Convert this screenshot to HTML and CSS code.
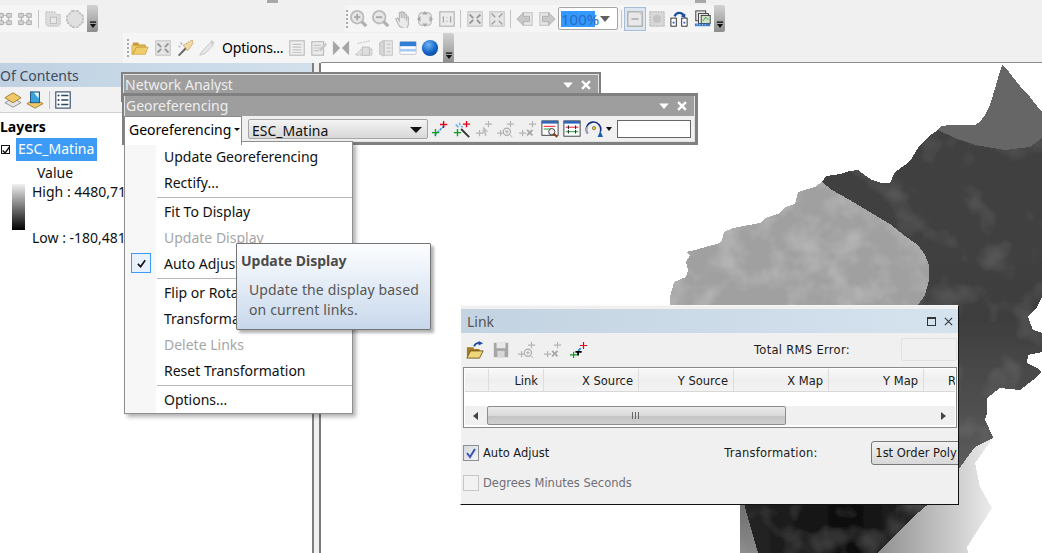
FILE: index.html
```html
<!DOCTYPE html>
<html lang="en">
<head>
<meta charset="utf-8">
<title>ArcMap Georeferencing</title>
<link rel="stylesheet" href="styles.css">
</head>
<body>
<svg class="defs" aria-hidden="true">
  <symbol id="zoomin" viewBox="0 0 20 20"><circle cx="8" cy="8" r="7" fill="#e6e6e6" stroke="#bcbcbc" stroke-width="2"/><path d="M8 4.500v7M4.500 8h7" stroke="#a6a6a6" stroke-width="2"/><path d="M13 13l5 5" stroke="#b0b0b0" stroke-width="3.500"/></symbol>
  <symbol id="zoomout" viewBox="0 0 20 20"><circle cx="8" cy="8" r="7" fill="#e6e6e6" stroke="#bcbcbc" stroke-width="2"/><path d="M4.500 8h7" stroke="#a6a6a6" stroke-width="2"/><path d="M13 13l5 5" stroke="#b0b0b0" stroke-width="3.500"/></symbol>
  <symbol id="hand" viewBox="0 0 20 20"><path d="M6 18L2 10l2-1 2 3V3h2v6-7h2v7-6h2v7-5h2v7-4h2v8l-2 6z" fill="#eaeaea" stroke="#b8b8b8" stroke-width="1.300"/></symbol>
  <symbol id="full" viewBox="0 0 20 20"><rect x="3" y="3" width="14" height="14" rx="4" fill="#e8e8e8" stroke="#c0c0c0" stroke-width="1.500"/><path d="M10 1l3 4H7zM10 19l3-4H7zM1 10l4-3v6zM19 10l-4-3v6z" fill="#a8a8a8"/></symbol>
  <symbol id="one" viewBox="0 0 20 20"><rect x="2" y="2" width="16" height="16" fill="#ececec" stroke="#bbb" stroke-width="1.500"/><path d="M6 7v7M14 7v7M10 8v1M10 12v1" stroke="#a8a8a8" stroke-width="1.500"/></symbol>
  <symbol id="fixin" viewBox="0 0 20 20"><rect x="2" y="2" width="16" height="16" fill="#e6e6e6" stroke="#bdbdbd"/><path d="M4 5l4 4M16 5l-4 4M4 15l4-4M16 15l-4-4" stroke="#979797" stroke-width="2"/></symbol>
  <symbol id="fixout" viewBox="0 0 20 20"><rect x="2" y="2" width="16" height="16" fill="#e6e6e6" stroke="#bdbdbd"/><path d="M8 8L4 4M12 8l4-4M8 12l-4 4M12 12l4 4" stroke="#a2a2a2" stroke-width="1.600"/></symbol>
  <symbol id="back" viewBox="0 0 20 20"><rect x="8" y="3" width="10" height="14" fill="#e6e6e6" stroke="#bdbdbd"/><path d="M1 10l7-7v4h7v6H8v4z" fill="#c8c8c8" stroke="#afafaf"/></symbol>
  <symbol id="forward" viewBox="0 0 20 20"><rect x="2" y="3" width="10" height="14" fill="#e6e6e6" stroke="#bdbdbd"/><path d="M19 10l-7-7v4H5v6h7v4z" fill="#c8c8c8" stroke="#afafaf"/></symbol>
  <symbol id="page" viewBox="0 0 20 20"><rect x="2" y="2" width="16" height="16" fill="#e8e8e8" stroke="#a5a5a5" stroke-width="1.300"/><path d="M6 10h8" stroke="#a0a0a0" stroke-width="1.500"/><path d="M13 2h5v5z" fill="#cfcfcf"/></symbol>
  <symbol id="dots" viewBox="0 0 20 20"><rect x="2" y="2" width="16" height="16" fill="#d8d8d8" stroke="#aaa" stroke-dasharray="2 1"/><circle cx="10" cy="10" r="4.500" fill="#c4c4c4"/></symbol>
  <symbol id="refresh" viewBox="0 0 20 20"><rect x="1" y="9" width="6" height="9" fill="#fff" stroke="#222"/><rect x="13" y="9" width="6" height="9" fill="#fff" stroke="#222"/><path d="M3 14h2M15 14h2" stroke="#2a5aa8" stroke-width="2"/><path d="M5 7c2-5 8-5 10-1" fill="none" stroke="#1d4f9a" stroke-width="2.500"/><path d="M12 7l5 2 0-5z" fill="#1d4f9a"/></symbol>
  <symbol id="pages" viewBox="0 0 20 20"><rect x="2" y="1" width="11" height="11" fill="#e8e8e8" stroke="#333"/><rect x="5" y="4" width="11" height="11" fill="#f4f4f4" stroke="#333"/><rect x="8" y="6" width="10" height="9" fill="#cfe3c8" stroke="#333"/><path d="M10 12l3-4 3 3" fill="none" stroke="#3d8f3d"/><path d="M1 15h17v3H1z" fill="#3a79c9"/><path d="M3 16.500h1M6 16.500h1M9 16.500h1M12 16.500h1" stroke="#fff"/></symbol>
  <symbol id="grid" viewBox="0 0 20 20"><path d="M3 6h14M3 14h14M6 3v14M14 3v14" stroke="#bdbdbd" stroke-width="1.500"/><rect x="3" y="4" width="5" height="4" fill="#d6d6d6" stroke="#aaa"/><rect x="12" y="4" width="5" height="4" fill="#d6d6d6" stroke="#aaa"/><rect x="3" y="12" width="5" height="4" fill="#d6d6d6" stroke="#aaa"/><rect x="12" y="12" width="5" height="4" fill="#d6d6d6" stroke="#aaa"/></symbol>
  <symbol id="blobs" viewBox="0 0 20 20"><path d="M2 2h10l2 3h4v11l-2 2H4l-2-3z" fill="#dcdcdc" stroke="#b8b8b8" stroke-dasharray="2 1"/><rect x="7" y="8" width="7" height="7" fill="#e8e8e8" stroke="#bbb"/></symbol>
  <symbol id="poly" viewBox="0 0 20 20"><path d="M7 1h6l6 6v6l-6 6H7l-6-6V7z" fill="#e0e0e0" stroke="#c0c0c0" stroke-width="2" stroke-dasharray="3 1"/></symbol>
  <symbol id="folder" viewBox="0 0 20 20"><path d="M2 4h6l1 2h7v3H2z" fill="#c99a3a"/><path d="M1 17V7h15v2H6L2 17zM2 17l4-8h13l-3 8z" fill="#f0cd6b" stroke="#c9a040" stroke-width=".8"/></symbol>
  <symbol id="wand" viewBox="0 0 20 20"><path d="M2 18L13 6l2 2L4 19z" fill="#6b6b6b"/><path d="M8 7L18 1l1 4-6 8z" fill="#f0d9a6" stroke="#b9833a" stroke-width=".8" stroke-dasharray="2 1"/><path d="M3 8l2 1M5 4l2 2" stroke="#b0b0b0" stroke-width="1.500"/></symbol>
  <symbol id="pencil" viewBox="0 0 20 20"><path d="M2 18l3-5L14 4l3 3-9 9z" fill="#e6e6e6" stroke="#c4c4c4"/><path d="M15 1l3 3-1 2-3-3z" fill="#c6c6c6"/></symbol>
  <symbol id="table" viewBox="0 0 20 20"><rect x="2" y="2" width="16" height="16" fill="#f0f0f0" stroke="#bbb" stroke-width="1.300"/><path d="M5 6h10M5 9h10M5 12h10M5 15h10" stroke="#c4c4c4" stroke-width="1.300"/></symbol>
  <symbol id="form" viewBox="0 0 20 20"><rect x="2" y="3" width="13" height="15" fill="#ececec" stroke="#bbb" stroke-width="1.300"/><path d="M4 7h8M4 10h8M4 13h6" stroke="#c4c4c4" stroke-width="1.300"/><path d="M10 12l7-8 2 2-7 8z" fill="#c8c8c8"/></symbol>
  <symbol id="bow" viewBox="0 0 20 20"><path d="M1 2l8 8-8 8zM19 2l-8 8 8 8z" fill="#a6a6a6"/></symbol>
  <symbol id="stair" viewBox="0 0 20 20"><path d="M1 17l6-6h12v7H1zM3 5l14-3" fill="#e0e0e0" stroke="#bbb" stroke-dasharray="2 1"/><rect x="8" y="9" width="8" height="9" fill="#dedede" stroke="#bbb"/></symbol>
  <symbol id="book" viewBox="0 0 20 20"><path d="M3 4l5-3v18l-5-2z" fill="#d6d6d6" stroke="#c0c0c0"/><rect x="8" y="2" width="9" height="16" fill="#e8e8e8" stroke="#c0c0c0"/><path d="M11 6h4M11 10h4M11 14h4" stroke="#bbb"/></symbol>
  <symbol id="stripes" viewBox="0 0 20 20"><rect x="1" y="3" width="18" height="14" rx="1" fill="#fff" stroke="#c0c0c0"/><rect x="1" y="3" width="18" height="5" fill="#2f7fd6"/><rect x="1" y="11" width="18" height="3" fill="#a7cdf2"/></symbol>
  <symbol id="globe" viewBox="0 0 20 20"><defs><radialGradient id="gl" cx=".4" cy=".3" r=".8"><stop offset="0" stop-color="#6fb6f5"/><stop offset=".6" stop-color="#1565c8"/><stop offset="1" stop-color="#0b3f94"/></radialGradient></defs><circle cx="10" cy="10" r="9" fill="url(#gl)"/></symbol>
  <symbol id="cross" viewBox="0 0 20 20"><path d="M4 17l12-12" stroke="#2f8fe0" stroke-width="1.500" stroke-dasharray="3 1"/><path d="M14 1v8M10 5h8" stroke="#e2001a" stroke-width="1.500"/><path d="M5 10v8M1 14h8" stroke="#0a9a1e" stroke-width="1.500"/></symbol>
  <symbol id="crosswand" viewBox="0 0 20 20"><path d="M15 1v7M11 4.500h8" stroke="#e2001a" stroke-width="1.500"/><path d="M5 10v8M1 14h8" stroke="#0a9a1e" stroke-width="1.500"/><path d="M9 10l9 9" stroke="#333" stroke-width="2"/><path d="M3 5l3 3M7 3l1 3M11 8l-2-1" stroke="#52a7ee" stroke-width="1.500"/></symbol>
  <symbol id="grayarrow" viewBox="0 0 20 20"><path d="M15 1v7M11 4.500h8M5 11v7M1 14.500h8" stroke="#b4b4b4" stroke-width="1.300"/><path d="M9 7l6 6-3 0 1 4-2 1-1-4-2 2z" fill="#c2c2c2"/></symbol>
  <symbol id="grayzoom" viewBox="0 0 20 20"><path d="M15 1v7M11 4.500h8M4 11v7M0 14.500h8" stroke="#b4b4b4" stroke-width="1.300"/><circle cx="11" cy="13" r="4" fill="#eee" stroke="#adadad" stroke-width="1.300"/><path d="M9 13h4M11 11v4M14 16l3 3" stroke="#adadad"/></symbol>
  <symbol id="grayx" viewBox="0 0 20 20"><path d="M15 1v7M11 4.500h8M4 11v7M0 14.500h8" stroke="#b4b4b4" stroke-width="1.300"/><path d="M9 11l6 6M15 11l-6 6" stroke="#a6a6a6" stroke-width="2"/></symbol>
  <symbol id="viewlinks" viewBox="0 0 20 20"><rect x="1" y="1" width="18" height="16" fill="#fff" stroke="#333"/><rect x="1" y="1" width="18" height="3" fill="#2f66b5"/><path d="M3 7h13" stroke="#e2001a"/><path d="M3 10h9" stroke="#0a9a1e"/><circle cx="12" cy="13" r="3.500" fill="#eee" stroke="#333"/><path d="M14 15l4 4" stroke="#8a3b1a" stroke-width="2"/></symbol>
  <symbol id="links" viewBox="0 0 20 20"><rect x="1" y="1" width="18" height="17" fill="#fff" stroke="#333"/><rect x="1" y="1" width="18" height="3" fill="#2f66b5"/><path d="M3 8h14" stroke="#e2001a"/><path d="M3 13h14" stroke="#0a9a1e"/><path d="M6 6v4M14 6v4M6 11v4M14 11v4" stroke="#111"/></symbol>
  <symbol id="rotate" viewBox="0 0 20 20"><path d="M3 15A8 8 0 1 1 17 13" fill="none" stroke="#1b2f80" stroke-width="1.800"/><path d="M3 15A8 8 0 0 1 3 7" fill="none" stroke="#aab" stroke-width="1.800"/><path d="M14 19h6l-3-7z" fill="#1a5fb4"/><circle cx="10" cy="9" r="1.800" fill="#f2d21b" stroke="#333" stroke-width=".6"/></symbol>
  <symbol id="layers" viewBox="0 0 20 20"><path d="M10 8l9 5-9 5-9-5z" fill="#e3e3e3" stroke="#8c8c8c"/><path d="M10 2l9 5.500-9 5.500-9-5.500z" fill="#f0c868" stroke="#9a7a2a"/></symbol>
  <symbol id="source" viewBox="0 0 20 20"><path d="M10 9l9 5-9 5-9-5z" fill="#f0c868" stroke="#9a7a2a"/><rect x="5" y="1" width="10" height="12" fill="#3aa3dc" stroke="#1d4f7a"/><path d="M9 2h5v6z" fill="#fff"/></symbol>
  <symbol id="options" viewBox="0 0 20 20"><rect x="2" y="1" width="16" height="18" fill="#fff" stroke="#2a4466" stroke-width="1.200"/><path d="M8 5h8M8 10h8M8 15h8" stroke="#2a4466" stroke-width="1.400"/><circle cx="5" cy="5" r="1.200" fill="#2a4466"/><circle cx="5" cy="10" r="1.200" fill="#2a4466"/><circle cx="5" cy="15" r="1.200" fill="#2a4466"/></symbol>
  <symbol id="open" viewBox="0 0 20 20"><path d="M1 7h7l1 2h6v2H5l-4 8z" fill="#a27d24"/><path d="M1 19l4-8h14l-4 8z" fill="#f0d67a" stroke="#6e5616"/><path d="M9 6c1-3 3-4 6-4" fill="none" stroke="#1d4f9a" stroke-width="2"/><path d="M14 0l5 2.500L14 5z" fill="#1d4f9a"/></symbol>
  <symbol id="save" viewBox="0 0 20 20"><path d="M2 2h16v16H2z" fill="#a6a6a6"/><rect x="5" y="2" width="10" height="6" fill="#e8e8e8"/><rect x="6" y="11" width="8" height="7" fill="#d8d8d8"/></symbol>
  <symbol id="linkadd" viewBox="0 0 20 20"><path d="M15 1v8M11 5h8" stroke="#e2001a" stroke-width="1.300"/><path d="M4 12v7M0 15.500h8" stroke="#0a9a1e" stroke-width="1.300"/><path d="M12 8l-3 3" stroke="#2f8fe0" stroke-width="2"/><path d="M9 11h4v2h-3v3H8v-3H6v-2h3z" fill="#000"/></symbol>
  <symbol id="tick" viewBox="0 0 12 12"><path d="M2 6.500l3 3 5-7" fill="none" stroke="#111" stroke-width="1.800"/></symbol>
  <symbol id="ovf" viewBox="0 0 9 8"><path d="M1 0h7v1.500H1z" fill="#111"/><path d="M1 3h7L4.500 7.500z" fill="#111"/></symbol>
  <symbol id="dash" viewBox="0 0 20 20"><path d="M2 6h16L10 15z" fill="#fff"/></symbol>
  <symbol id="close" viewBox="0 0 20 20"><path d="M3.500 3.500l13 13M16.500 3.500l-13 13" stroke="#fff" stroke-width="4"/></symbol>
</svg>

<div class="app">
  <header class="topbar">
    <span class="stub stub-a"></span><span class="stub stub-b"></span>
    <div class="row row-one">
      <div class="toolbar tb-left">
        <svg class="ic ic-cut"><use href="#grid"/></svg>
        <svg class="ic"><use href="#grid"/></svg>
        <i class="sep"></i>
        <svg class="ic"><use href="#blobs"/></svg>
        <svg class="ic"><use href="#poly"/></svg>
        <span class="ovf"><svg class="ovf-g"><use href="#ovf"/></svg></span>
      </div>
      <div class="toolbar tb-right">
        <i class="grip"></i>
        <svg class="ic"><use href="#zoomin"/></svg>
        <svg class="ic"><use href="#zoomout"/></svg>
        <svg class="ic"><use href="#hand"/></svg>
        <svg class="ic"><use href="#full"/></svg>
        <svg class="ic"><use href="#one"/></svg>
        <i class="sep"></i>
        <svg class="ic"><use href="#fixin"/></svg>
        <svg class="ic"><use href="#fixout"/></svg>
        <i class="sep"></i>
        <svg class="ic"><use href="#back"/></svg>
        <svg class="ic"><use href="#forward"/></svg>
        <div class="scale"><span class="scale-val">100%</span><span class="scale-arrow"></span></div>
        <i class="sep sep-tight"></i>
        <span class="active"><svg class="ic"><use href="#page"/></svg></span>
        <svg class="ic"><use href="#dots"/></svg>
        <svg class="ic"><use href="#refresh"/></svg>
        <svg class="ic ic-wide"><use href="#pages"/></svg>
        <span class="ovf"><svg class="ovf-g"><use href="#ovf"/></svg></span>
      </div>
    </div>
    <div class="toolbar tb-second">
      <i class="grip"></i>
      <svg class="ic"><use href="#folder"/></svg>
      <svg class="ic ic-gap"><use href="#fixin"/></svg>
      <svg class="ic"><use href="#wand"/></svg>
      <svg class="ic"><use href="#pencil"/></svg>
      <span class="tb-text">Options...</span>
      <svg class="ic"><use href="#table"/></svg>
      <svg class="ic"><use href="#form"/></svg>
      <svg class="ic"><use href="#bow"/></svg>
      <svg class="ic ic-gap"><use href="#stair"/></svg>
      <svg class="ic"><use href="#book"/></svg>
      <svg class="ic"><use href="#stripes"/></svg>
      <svg class="ic"><use href="#globe"/></svg>
      <span class="ovf"><svg class="ovf-g"><use href="#ovf"/></svg></span>
    </div>
  </header>

  <main class="workspace">
    <aside class="toc">
      <div class="toc-title"><span>Of Contents</span></div>
      <div class="toc-tools">
        <svg class="ic"><use href="#layers"/></svg>
        <svg class="ic"><use href="#source"/></svg>
        <i class="sep"></i>
        <svg class="ic"><use href="#options"/></svg>
      </div>
      <div class="tree">
        <div class="tree-root">Layers</div>
        <div class="tree-layer"><span class="tree-check"><svg class="tree-tick"><use href="#tick"/></svg></span><span class="tree-name">ESC_Matina</span></div>
        <div class="tree-value">Value</div>
        <div class="legend">
          <span class="ramp"></span>
          <div class="legend-labels"><span>High : 4480,71</span><span>Low : -180,481</span></div>
        </div>
      </div>
    </aside>
    <div class="splitter"></div>
    <section class="map">
      <svg class="map-svg" viewBox="321 63 721 490" preserveAspectRatio="none">
        <defs>
          <filter id="mottle" x="0" y="0" width="1" height="1">
            <feTurbulence type="fractalNoise" baseFrequency=".035" numOctaves="3" seed="7"/>
            <feColorMatrix values="0 0 0 0 1 0 0 0 0 1 0 0 0 0 1 .42 0 0 0 -.17"/>
            <feComposite in2="SourceAlpha" operator="in" result="n"/>
            <feMerge><feMergeNode in="SourceGraphic"/><feMergeNode in="n"/></feMerge>
          </filter>
          <filter id="mottle-dark" x="0" y="0" width="1" height="1">
            <feTurbulence type="fractalNoise" baseFrequency=".025" numOctaves="3" seed="3"/>
            <feColorMatrix values="0 0 0 0 1 0 0 0 0 1 0 0 0 0 1 .14 0 0 0 -.07"/>
            <feComposite in2="SourceAlpha" operator="in" result="n"/>
            <feMerge><feMergeNode in="SourceGraphic"/><feMergeNode in="n"/></feMerge>
          </filter>
          <linearGradient id="darkfade" x1="0" y1="0" x2="0" y2="1">
            <stop offset="0" stop-color="#414141"/><stop offset=".45" stop-color="#3e3e3e"/><stop offset=".8" stop-color="#5c5c5c"/><stop offset="1" stop-color="#8a8a8a"/>
          </linearGradient>
          <linearGradient id="band" x1="0" y1="0" x2="1" y2="0">
            <stop offset="0" stop-color="#8f8f8f"/><stop offset=".7" stop-color="#cfcfcf"/><stop offset="1" stop-color="#ececec"/>
          </linearGradient>
          <linearGradient id="black" x1="0" y1="0" x2="1" y2="0">
            <stop offset="0" stop-color="#262626"/><stop offset=".5" stop-color="#0c0c0c"/><stop offset="1" stop-color="#3a3a3a"/>
          </linearGradient>
        </defs>
        <polygon fill="#666" points="1002,65 1006,68 1012,76 1020,86 1030,97 1037,106 1042,112 1042,138 1030,147 1005,150 975,145 955,138 938,130 941,126 950,125 975,125 980,122 985,115 990,105 993,95 996,85 998,78"/>
        <polygon fill="url(#darkfade)" filter="url(#mottle-dark)" points="822,182 826,176 840,174 850,171 858,170 866,176 872,180 882,183 890,183 895,172 905,165 912,158 918,148 925,140 932,134 938,130 955,138 975,145 1005,150 1030,147 1042,138 1042,297 1037,307 1028,317 1033,330 1042,333 1042,352 1028,355 1027,363 1037,368 1042,372 1033,380 1020,390 1000,388 987,398 987,413 985,420 993,437 975,463 958,490 913,517 877,553 740,553 740,300 900,305"/>
        <polygon fill="url(#band)" points="993,438 975,463 980,487 992,508 967,547 968,553 877,553 913,517 945,490 958,470 975,447"/>
        <polygon fill="url(#black)" filter="url(#mottle-dark)" points="743,500 958,500 958,472 945,490 913,517 877,553 758,553 750,525"/>
        <polygon fill="#a0a0a0" filter="url(#mottle)" points="822,182 832,190 850,200 870,212 890,224 905,236 918,245 925,255 929,265 929,280 925,295 918,305 913,310 670,310 670,297 674,282 686,277 688,270 686,262 690,255 686,252 695,250 720,243 722,240 724,232 733,228 760,223 765,218 780,213 785,207 795,204 798,192 808,189 815,187"/>
      </svg>
    </section>
  </main>

  <div class="win win-na">
    <div class="win-title"><span>Network Analyst</span><svg class="win-btn"><use href="#dash"/></svg><svg class="win-btn"><use href="#close"/></svg></div>
  </div>

  <div class="win win-geo">
    <div class="win-title"><span>Georeferencing</span><svg class="win-btn"><use href="#dash"/></svg><svg class="win-btn"><use href="#close"/></svg></div>
    <div class="geo-tools">
      <div class="geo-menu-btn">Georeferencing<span class="small-arrow"></span></div>
      <div class="combo"><span>ESC_Matina</span><span class="combo-arrow"></span></div>
      <svg class="ic"><use href="#cross"/></svg>
      <svg class="ic"><use href="#crosswand"/></svg>
      <svg class="ic"><use href="#grayarrow"/></svg>
      <svg class="ic"><use href="#grayzoom"/></svg>
      <svg class="ic"><use href="#grayx"/></svg>
      <svg class="ic"><use href="#viewlinks"/></svg>
      <svg class="ic"><use href="#links"/></svg>
      <svg class="ic"><use href="#rotate"/></svg>
      <span class="small-arrow small-arrow-tool"></span>
      <span class="geo-input"></span>
    </div>
  </div>

  <nav class="menu">
    <div class="menu-item">Update Georeferencing</div>
    <div class="menu-item">Rectify...</div>
    <hr class="menu-sep">
    <div class="menu-item">Fit To Display</div>
    <div class="menu-item is-off">Update Display</div>
    <div class="menu-item"><span class="menu-check"><svg class="menu-tick"><use href="#tick"/></svg></span>Auto Adjust</div>
    <hr class="menu-sep">
    <div class="menu-item">Flip or Rotate</div>
    <div class="menu-item">Transformations</div>
    <div class="menu-item is-off">Delete Links</div>
    <div class="menu-item">Reset Transformation</div>
    <hr class="menu-sep">
    <div class="menu-item">Options...</div>
  </nav>

  <div class="tip">
    <div class="tip-title">Update Display</div>
    <div class="tip-body">Update the display based<br>on current links.</div>
  </div>

  <div class="link">
    <div class="link-title"><span>Link</span><span class="link-max"></span><svg class="link-x" viewBox="0 0 10 10"><path d="M1 1l8 8M9 1l-8 8" stroke="#333" stroke-width="1.200"/></svg></div>
    <div class="link-tools">
      <svg class="ic ic-link"><use href="#open"/></svg>
      <svg class="ic ic-link"><use href="#save"/></svg>
      <svg class="ic ic-link"><use href="#grayzoom"/></svg>
      <svg class="ic ic-link"><use href="#grayx"/></svg>
      <svg class="ic ic-link"><use href="#linkadd"/></svg>
      <span class="rms-label">Total RMS Error:</span>
      <span class="rms-box"></span>
    </div>
    <div class="link-table">
      <div class="link-head">
        <span></span><span>Link</span><span>X Source</span><span>Y Source</span><span>X Map</span><span>Y Map</span><span class="clip">R</span>
      </div>
      <div class="link-row"></div>
      <div class="scroll">
        <span class="scroll-left"></span>
        <span class="scroll-thumb"><i class="thumb-grip"></i></span>
        <span class="scroll-right"></span>
      </div>
    </div>
    <div class="link-options">
      <span class="check"><svg class="check-tick" viewBox="0 0 12 12"><path d="M2 6l3 4 5-8" fill="none" stroke="#3c55b0" stroke-width="2"/></svg></span>
      <span>Auto Adjust</span>
      <span class="trans-label">Transformation:</span>
      <span class="trans-btn"><span>1st Order Poly</span></span>
    </div>
    <div class="link-options link-dms">
      <span class="check check-off"></span>
      <span>Degrees Minutes Seconds</span>
    </div>
  </div>
</div>
</body>
</html>
```

FILE: styles.css
```css
* { box-sizing: border-box; }
html, body { margin: 0; height: 100%; overflow: hidden; }
body { background: #fff; font-family: "Noto Sans", "Open Sans", sans-serif; font-size: 14px; color: #111; }
.defs { position: absolute; width: 0; height: 0; }

.app { position: relative; width: 1042px; height: 553px; overflow: hidden; display: flex; flex-direction: column; }

/* top toolbars */
.topbar { position: relative; height: 63px; flex: none; padding-top: 5px; background: #f0f0f0; }
.stub { position: absolute; top: 0; height: 3px; background: #a8a8a8; }
.stub-a { left: 267px; width: 11px; }
.stub-b { left: 695px; width: 11px; }
.row { display: flex; height: 27px; }
.toolbar { display: flex; align-items: center; background: #f5f5f5; position: relative; }
.tb-left { width: 98px; padding-right: 11px; }
.tb-right { width: 380px; margin-left: 247px; padding-right: 11px; }
.tb-second { width: 331px; height: 30px; margin-left: 123px; margin-top: 1px; padding-left: 3px; padding-right: 11px; }
.ic { width: 18px; height: 18px; margin: 0 2px; flex: none; display: block; }
.ic.ic-cut { margin: 0 0 0 -4px; }
.ic.ic-gap { margin-left: 3px; }
.ic.ic-wide { margin-left: 4px; }
.grip { width: 2px; height: 18px; margin: 0 0 0 1px; flex: none; background: repeating-linear-gradient(#a9a9a9 0 2px, transparent 2px 4px); }
.sep { width: 1px; height: 18px; background: #c4c4c4; margin: 0 3px 0 2px; flex: none; }
.sep.sep-tight { margin: 0 2px 0 3px; }
.ovf { position: absolute; right: 0; top: 0; bottom: 0; width: 11px; background: linear-gradient(#d2d2d2, #8e8e8e); border-radius: 0 2px 2px 0; display: flex; justify-content: center; align-items: flex-end; padding-bottom: 3px; }
.ovf-g { width: 8px; height: 8px; }
.scale { width: 60px; height: 23px; flex: none; display: flex; align-items: center; justify-content: space-between; background: #fff; border: 1px solid #a5a5a5; border-radius: 2px; padding: 0 7px 0 2px; font-size: 15px; }
.scale-val { background: #3399ff; color: #2b6cc0; width: 34px; line-height: 16px; }
.scale-arrow { width: 0; height: 0; border: 5px solid transparent; border-top: 6px solid #606060; border-bottom: 0; }
.active { display: block; width: 22px; background: #dbe6f1; border: 1px solid #a9bdd2; padding: 2px 0; }
.active .ic { margin: 0 1px; }
.tb-text { font-size: 14px; letter-spacing: -.2px; color: #000; margin: 0 3px 0 4px; width: 61px; white-space: nowrap; line-height: 1; flex: none; }

/* workspace */
.workspace { flex: 1; display: flex; min-height: 0; }
.toc { width: 312px; flex: none; display: flex; flex-direction: column; background: #fff; }
.toc-title { height: 25px; margin-top: -1px; background: linear-gradient(90deg, #bfd1e2, #d2e0ec); font-size: 14px; color: #3e4d5e; line-height: 27px; white-space: nowrap; flex: none; }
.toc-tools { height: 26px; flex: none; display: flex; align-items: center; padding-left: 3px; background: #f2f2f2; border-bottom: 1px solid #d0d0d0; }
.toc-tools .ic { margin: 0 3px 0 1px; }
.toc-tools .sep { margin: 0 3px 0 2px; }
.tree { flex: 1; position: relative; padding-top: 4px; font-size: 14px; color: #111; }
.tree-root { font-weight: 700; height: 19px; line-height: 19px; color: #000; }
.tree-layer { display: flex; align-items: center; gap: 6px; height: 23px; margin-top: 2px; padding-left: 1px; }
.tree-check { width: 9px; height: 9px; border: 1px solid #111; display: block; flex: none; position: relative; }
.tree-tick { position: absolute; left: -1px; top: -1px; width: 10px; height: 10px; }
.tree-name { background: #3d9bf5; color: #fff; padding: 0 2px; height: 23px; width: 81px; line-height: 21px; }
.tree-value { margin: 2px 0 0 37px; height: 20px; line-height: 20px; }
.legend { display: flex; gap: 7px; height: 58px; padding-left: 12px; margin-top: 1px; }
.ramp { width: 13px; height: 46px; flex: none; background: linear-gradient(#f0f0f0, #000); }
.legend-labels { display: flex; flex-direction: column; justify-content: space-between; margin-top: -2px; white-space: nowrap; line-height: 20px; height: 66px; }

.splitter { width: 9px; flex: none; background: #f0f0f0; border-left: 2px solid #7f7f7f; border-right: 2px solid #7a7a7a; }
.map { flex: 1; position: relative; background: #fff; border-top: 1px solid #8c8c8c; margin-top: -1px; }
.map-svg { position: absolute; left: 0; top: 0; width: 100%; height: 100%; display: block; shape-rendering: crispEdges; }

/* floating windows */
.win { position: absolute; background: #f0f0f0; border: 2px solid #808080; box-shadow: inset 0 0 0 1px #e2e2e2; }
.win-na { left: 121px; top: 72px; width: 480px; height: 30px; }
.win-geo { left: 122px; top: 93px; width: 576px; height: 52px; border-width: 3px 3px 3px 2px; }
.win-title { display: flex; align-items: center; height: 20px; margin: 1px 1px 0; padding-left: 1px; background: #9e9e9e; color: #ededed; font-size: 14px; line-height: 20px; }
.win-geo .win-title { margin-top: 0; }
.win-title span { flex: 1; }
.win-btn { width: 12px; height: 12px; margin-right: 6px; display: block; flex: none; }
.geo-tools { display: flex; align-items: center; height: 26px; position: relative; }
.geo-menu-btn { width: 118px; height: 29px; margin-top: 3px; background: #fff; border: 1px solid #8a8a8a; border-bottom: 0; padding: 0 0 4px 4px; display: flex; align-items: center; gap: 3px; white-space: nowrap; z-index: 3; position: relative; color: #000; }
.small-arrow { width: 0; height: 0; border: 3px solid transparent; border-top: 3px solid #111; border-bottom: 0; flex: none; }
.small-arrow.small-arrow-tool { margin: 0 5px 0 1px; border-width: 4px 3.5px 0; }
.combo { width: 180px; height: 20px; margin: 0 1px 0 6px; flex: none; display: flex; align-items: center; justify-content: space-between; padding: 2px 5px 0 3px; background: linear-gradient(#f4f4f4, #d8d8d8); border: 1px solid #a5a5a5; border-radius: 2px; color: #111; }
.combo-arrow { width: 0; height: 0; border: 6px solid transparent; border-top: 6px solid #111; border-bottom: 0; }
.geo-input { width: 74px; height: 18px; background: #fff; border: 1px solid #666; flex: none; }

.menu { position: absolute; left: 124px; top: 141px; width: 229px; height: 273px; padding: 2px 0 0; background: linear-gradient(90deg, #f7f7f7 31px, #fff 31px); border: 1px solid #8f8f8f; box-shadow: 3px 3px 4px rgba(0,0,0,.3); z-index: 2; }
.menu-item { position: relative; height: 26px; line-height: 26px; padding-left: 39px; color: #111; white-space: nowrap; }
.is-off { color: #a6a6a6; }
.menu-sep { height: 1px; margin: 1px 0 1px 32px; border: 0; background: #b8b8b8; }
.menu-check { position: absolute; left: 6px; top: 2px; width: 20px; height: 20px; background: #e8f2fc; border: 1px solid #3d9bf5; display: flex; align-items: center; justify-content: center; }
.menu-tick { width: 11px; height: 11px; }

.tip { position: absolute; left: 236px; top: 243px; width: 195px; height: 87px; padding: 7px 4px; background: linear-gradient(#fdfeff, #c8d8ec); border: 1px solid #747474; border-radius: 1px; box-shadow: 3px 3px 3px rgba(0,0,0,.3); z-index: 4; color: #565656; }
.tip-title { font-weight: 700; line-height: 20px; color: #4b4b4b; }
.tip-body { margin: 9px 0 0 8px; line-height: 20px; letter-spacing: .14px; }

.link { position: absolute; left: 460px; top: 305px; width: 499px; height: 200px; overflow: hidden; padding: 3px 0 0 2px; background: #f0f0f0; border-top: 1px solid #f8f8f8; border-left: 1px solid #fff; border-right: 1px solid #111; border-bottom: 1px solid #111; font-family: "DejaVu Sans", sans-serif; font-size: 11.500px; color: #1a1a1a; z-index: 1; }
.link-title { display: flex; align-items: center; margin: 0 -1px 0 -2px; height: 24px; padding-left: 6px; background: linear-gradient(90deg, #c4d3e1, #d5e3ef); font-family: "Noto Sans", sans-serif; font-size: 14px; color: #555; }
.link-title span:first-child { flex: 1; }
.link-max { width: 9px; height: 9px; border: 1px solid #333; border-top-width: 2px; margin-right: 8px; }
.link-x { width: 9px; height: 9px; margin-right: 6px; }
.link-tools { display: flex; align-items: center; height: 24px; margin-top: 5px; }
.ic.ic-link { width: 18px; height: 18px; margin: 0 5px 0 3px; }
.rms-label { margin-left: 161px; width: 147px; flex: none; white-space: nowrap; letter-spacing: .3px; }
.rms-box { width: 56px; height: 23px; margin-top: -2px; border: 1px solid #e2e2e2; border-radius: 2px; background: #f0f0f0; flex: none; }
.link-table { width: 494px; height: 61px; margin-top: 5px; border: 1px solid #8a8a8a; background: #fff; padding: 1px; }
.link-head { display: grid; grid-template-columns: 24px 55px 95px 95px 95px 95px 1fr; height: 23px; overflow: hidden; background: linear-gradient(#f8f8f8, #efefef 50%, #f3f3f3); border-bottom: 1px solid #d8d8d8; }
.link-head span { border-right: 1px solid #dcdcdc; padding-right: 5px; text-align: right; line-height: 25px; white-space: nowrap; }
.link-head .clip { border: 0; text-align: left; padding: 0 0 0 24px; }
.link-row { height: 14px; }
.scroll { position: relative; display: flex; align-items: center; height: 19px; background: #f0f0f0; }
.scroll-left { width: 0; height: 0; border: 4px solid transparent; border-right: 5px solid #444; border-left: 0; margin: 0 9px 0 8px; flex: none; }
.scroll-thumb { width: 299px; height: 19px; flex: none; display: flex; align-items: center; justify-content: center; background: linear-gradient(#eaeaea, #dadada 50%, #c4c4c4 55%, #cfcfcf); border: 1px solid #8d8d8d; border-radius: 2px; }
.thumb-grip { width: 9px; height: 7px; background: repeating-linear-gradient(90deg, #666 0 1px, transparent 1px 3px); }
.scroll-right { position: absolute; right: 9px; width: 0; height: 0; border: 4px solid transparent; border-left: 5px solid #444; border-right: 0; }
.link-options { display: flex; align-items: center; height: 24px; margin-top: 13px; gap: 4px; white-space: nowrap; }
.link-dms { margin-top: 6px; color: #6f6f78; }
.check { width: 16px; height: 16px; flex: none; border: 1px solid #8e8f8f; background: linear-gradient(135deg, #d5d8df, #f3f4f6); display: flex; align-items: center; justify-content: center; }
.check-off { border-color: #c6c6c6; background: #f2f2f2; }
.check-tick { width: 12px; height: 12px; }
.trans-label { margin-left: 171px; width: 143px; flex: none; letter-spacing: .2px; }
.trans-btn { width: 96px; height: 24px; flex: none; line-height: 22px; padding-left: 3px; background: linear-gradient(#f2f2f2, #d8d8d8); border: 1px solid #777; border-radius: 3px; overflow: hidden; }
```
